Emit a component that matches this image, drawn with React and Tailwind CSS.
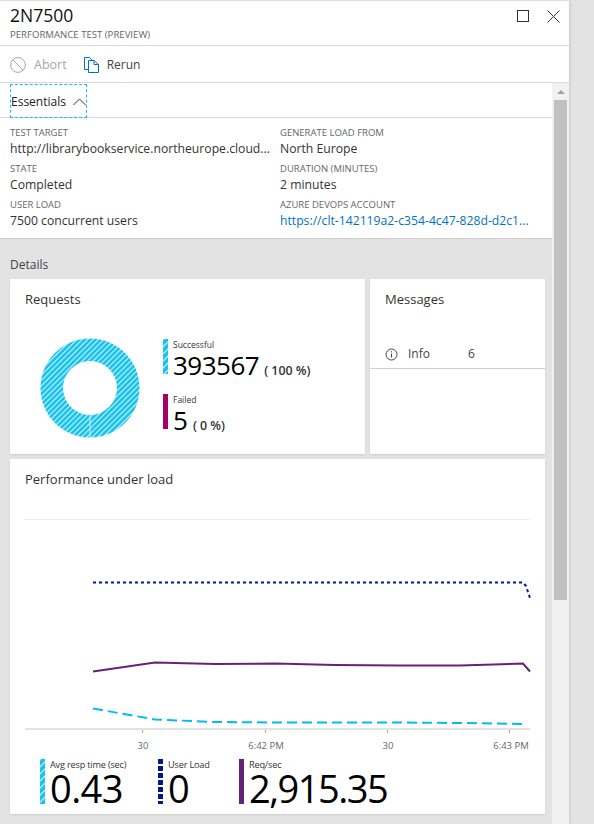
import React from 'react'

const font = { sans: "font-['Open_Sans','Noto_Sans',sans-serif]" }

const essentials = [
  [
    { label: 'TEST TARGET', value: 'http://librarybookservice.northeurope.cloud...' },
    { label: 'STATE', value: 'Completed' },
    { label: 'USER LOAD', value: '7500 concurrent users' },
  ],
  [
    { label: 'GENERATE LOAD FROM', value: 'North Europe' },
    { label: 'DURATION (MINUTES)', value: '2 minutes' },
    { label: 'AZURE DEVOPS ACCOUNT', value: 'https://clt-142119a2-c354-4c47-828d-d2c1...', link: true },
  ],
]

// diagonal stripes used by the "successful" series
const Stripes = ({ id, size = 3.8 }) => (
  <pattern id={id} width={size} height={size} patternUnits="userSpaceOnUse" patternTransform="rotate(-45)">
    <rect width={size} height={size} fill="#15c3ef" />
    <rect width={size} height="1.1" fill="#d2f3fc" />
  </pattern>
)

const StripedBar = ({ id, className }) => (
  <svg className={className} width="5" height="100%" preserveAspectRatio="none">
    <defs><Stripes id={id} size={5} /></defs>
    <rect width="5" height="100%" fill={`url(#${id})`} />
  </svg>
)

const Donut = () => (
  <svg width="100" height="100" viewBox="0 0 100 100">
    <defs><Stripes id="donut-stripes" /></defs>
    <path
      fillRule="evenodd"
      fill="url(#donut-stripes)"
      d="M50 0.5a49.5 49.5 0 1 0 0 99a49.5 49.5 0 1 0 0-99zM50 23a27 27 0 1 1 0 54a27 27 0 1 1 0-54z"
    />
    <line x1="50" y1="77" x2="50" y2="99.5" stroke="#d2f3fc" strokeWidth="1" />
  </svg>
)

const Chart = () => (
  <svg width="535" height="260" viewBox="10 499 535 260" className="block">
    <line x1="25" y1="519.5" x2="530" y2="519.5" stroke="#ececec" />
    <polyline
      points="93,582.5 523,582.5 526,586 530,598"
      fill="none" stroke="#00188f" strokeWidth="2" strokeDasharray="3 3"
    />
    <polyline
      points="93,671.5 155,662.5 215,664 275,663.5 335,665 400,665.5 460,665.5 523,663.5 530,671.5"
      fill="none" stroke="#68217a" strokeWidth="2"
    />
    <polyline
      points="93,708.5 155,719.5 215,722 275,722.5 335,722.5 400,722.5 460,723 523,724"
      fill="none" stroke="#00bcf2" strokeWidth="2" strokeDasharray="10 5"
    />
    <line x1="25" y1="729" x2="530" y2="729" stroke="#e2e2e2" strokeWidth="2" />
    {[143, 266, 388, 510].map((x) => (
      <line key={x} x1={x - 0.5} y1="730" x2={x - 0.5} y2="733" stroke="#aaa" />
    ))}
    <g fontFamily="Open Sans, sans-serif" fontSize="9.5" fill="#666" textAnchor="middle">
      <text x="143" y="749">30</text>
      <text x="266" y="749">6:42 PM</text>
      <text x="388" y="749">30</text>
      <text x="511" y="749">6:43 PM</text>
    </g>
  </svg>
)

const LegendValue = ({ bar, label, value, width, tracking }) => (
  <div className={`flex h-[45px] gap-[5px] ${width}`}>
    {bar}
    <div className="flex flex-col">
      <div className="text-[9.2px] leading-[11px] tracking-[-0.2px] text-[#333]">{label}</div>
      <div className={`text-[38px] leading-[36px] text-black ${tracking}`}>{value}</div>
    </div>
  </div>
)

const RequestStat = ({ bar, label, value, percent, tracking }) => (
  <div className="flex h-[35px]">
    {bar}
    <div className="ml-[5px]">
      <div className="text-[8.5px] leading-[11px] text-[#333]">{label}</div>
      <div className="flex items-baseline whitespace-nowrap mt-[2px]">
        <span className={`text-[26px] leading-[26px] text-black ${tracking}`}>{value}</span>
        <span className="ml-[5px] text-[12.4px] leading-[14px] font-semibold text-[#333]">{percent}</span>
      </div>
    </div>
  </div>
)

const App = () => {
  return (
    <div className={`flex w-[594px] h-[824px] overflow-hidden bg-[#e3e3e3] ${font.sans}`}>
      {/* ── Blade ── */}
      <div className="w-[569px] h-full flex flex-col bg-white border-t border-[#ddd] shrink-0 shadow-[1px_0_3px_rgba(0,0,0,0.12)]">
        <header className="h-[45px] shrink-0 border-b border-[#d9d9d9] flex justify-between pl-[10px] pr-[9px]">
          <div>
            <div className="text-[17.5px] leading-[22px] mt-[3px] text-[#111]">2N7500</div>
            <div className="text-[9.6px] leading-[12px] mt-[3px] text-[#666]">PERFORMANCE TEST (PREVIEW)</div>
          </div>
          <div className="flex gap-[18px] mt-[9px] h-[13px]">
            <div className="w-[12px] h-[12px] border border-[#333]" />
            <svg width="13" height="13" viewBox="0 0 13 13" fill="none" stroke="#333">
              <path d="M0.5 0.5l12 12M12.5 0.5l-12 12" />
            </svg>
          </div>
        </header>

        <div className="h-[37px] shrink-0 border-b border-[#d9d9d9] flex items-center pl-[10px] pt-[1px]">
          <svg width="16" height="16" viewBox="0 0 16 16" fill="none" stroke="#a8a8a8">
            <circle cx="8" cy="8" r="7.4" />
            <path d="M3 3l10 10" />
          </svg>
          <span className="ml-[8px] mt-[1px] text-[12.5px] text-[#a6a6a6]">Abort</span>
          <svg className="ml-[17px]" width="15" height="16" viewBox="0 0 15 16" fill="none" stroke="#0072c6">
            <path d="M4.5 12.5H0.5V0.5H5.5L8 3" />
            <path d="M4.5 3.5H10L14.5 7.5V15.5H4.5Z" />
            <path d="M10 3.5V7.5H14.5" />
          </svg>
          <span className="ml-[8px] mt-[1px] text-[12px] text-[#444]">Rerun</span>
        </div>

        <div className="flex flex-1 min-h-0">
          {/* ── Scrolling content ── */}
          <div className="w-[552px] shrink-0 flex flex-col">
            <div className="h-[35px] shrink-0 border-b border-[#d9d9d9] pl-[10px] pt-[1px]">
              <div className="w-[77px] h-[34px] border border-dashed border-[#15c3ef] flex items-center justify-between pt-[2px]">
                <span className="text-[12px] text-[#222]">Essentials</span>
                <svg width="13" height="8" viewBox="0 0 13 8" fill="none" stroke="#333">
                  <path d="M0.5 7L6.5 1L12.5 7" />
                </svg>
              </div>
            </div>

            <div className="h-[121px] shrink-0 border-b border-[#cfcfcf] px-[10px] pt-[8px] grid grid-cols-[270px_1fr]">
              {essentials.map((col, i) => (
                <div key={i} className="flex flex-col">
                  {col.map((row) => (
                    <div key={row.label} className="h-[36px]">
                      <div className="text-[9.5px] leading-[13px] text-[#666]">{row.label}</div>
                      <div className={`text-[12.2px] leading-[19px] whitespace-nowrap ${row.link ? 'text-[#0072c6]' : 'text-[#333]'}`}>
                        {row.value}
                      </div>
                    </div>
                  ))}
                </div>
              ))}
            </div>

            <div className="flex-1 bg-[#e3e3e3] pl-[10px] pr-[7px] min-h-0">
              <div className="h-[40px] flex items-center text-[12px] text-[#444] pt-[11px]">Details</div>

              <div className="flex gap-[5px]">
                <section className="w-[355px] h-[175px] shrink-0 bg-white shadow-[0_1px_2px_rgba(0,0,0,0.1)]">
                  <h2 className="text-[13px] font-medium text-[#333] pl-[15px] pt-[11px] leading-[18px]">Requests</h2>
                  <div className="flex mt-[31px] pl-[30px]">
                    <div className="-mt-[1px]"><Donut /></div>
                    <div className="ml-[23px] flex flex-col gap-[20px]">
                      <RequestStat
                        label="Successful"
                        value="393567"
                        percent="( 100 %)"
                        tracking="tracking-[-0.5px]"
                        bar={<StripedBar id="ok-bar" className="h-[35px]" />}
                      />
                      <RequestStat
                        label="Failed"
                        value="5"
                        percent="( 0 %)"
                        tracking="tracking-normal"
                        bar={<div className="w-[5px] h-[35px] bg-[#a80062]" />}
                      />
                    </div>
                  </div>
                </section>

                <section className="w-[175px] h-[175px] shrink-0 bg-white shadow-[0_1px_2px_rgba(0,0,0,0.1)]">
                  <h2 className="text-[13px] font-medium text-[#333] pl-[15px] pt-[11px] leading-[18px]">Messages</h2>
                  <div className="mt-[30px] h-[31px] pl-[15px] pt-[2px] flex items-center border-b border-[#cfcfcf] text-[12px] text-[#444]">
                    <svg width="13" height="13" viewBox="0 0 13 13" fill="none" stroke="#444">
                      <circle cx="6.5" cy="6.5" r="5.5" />
                      <path d="M6.5 5.5V9.5M6.5 3.2V4.4" />
                    </svg>
                    <span className="ml-[10px] w-[60px]">Info</span>
                    <span>6</span>
                  </div>
                </section>
              </div>

              <section className="mt-[5px] w-[535px] h-[355px] bg-white shadow-[0_1px_2px_rgba(0,0,0,0.1)]">
                <h2 className="h-[40px] text-[13px] font-medium text-[#333] pl-[15px] pt-[11px] leading-[18px]">
                  Performance under load
                </h2>
                <Chart />
                <div className="flex pl-[30px]">
                  <LegendValue
                    width="w-[118px]"
                    label="Avg resp time (sec)"
                    value="0.43"
                    tracking="tracking-[-0.6px]"
                    bar={<StripedBar id="resp-bar" className="h-[45px] shrink-0" />}
                  />
                  <LegendValue
                    width="w-[81px]"
                    label="User Load"
                    value="0"
                    tracking="tracking-normal"
                    bar={
                      <div className="w-[5px] h-[45px] shrink-0 bg-[repeating-linear-gradient(180deg,#00188f_0_5px,#fff_5px_7px)]" />
                    }
                  />
                  <LegendValue
                    width="w-[200px]"
                    label="Req/sec"
                    value="2,915.35"
                    tracking="tracking-[-1.5px]"
                    bar={<div className="w-[5px] h-[45px] shrink-0 bg-[#68217a]" />}
                  />
                </div>
              </section>
            </div>
          </div>

          {/* ── Scrollbar ── */}
          <div className="w-[17px] shrink-0 bg-[#f1f1f1] flex flex-col items-center">
            <div className="h-[17px] flex items-center justify-center">
              <div className="w-0 h-0 border-x-[4px] border-x-transparent border-b-[4px] border-b-[#a3a3a3]" />
            </div>
            <div className="w-[13px] h-[500px] bg-[#c1c1c1]" />
          </div>
        </div>
      </div>
    </div>
  )
}

export default App
